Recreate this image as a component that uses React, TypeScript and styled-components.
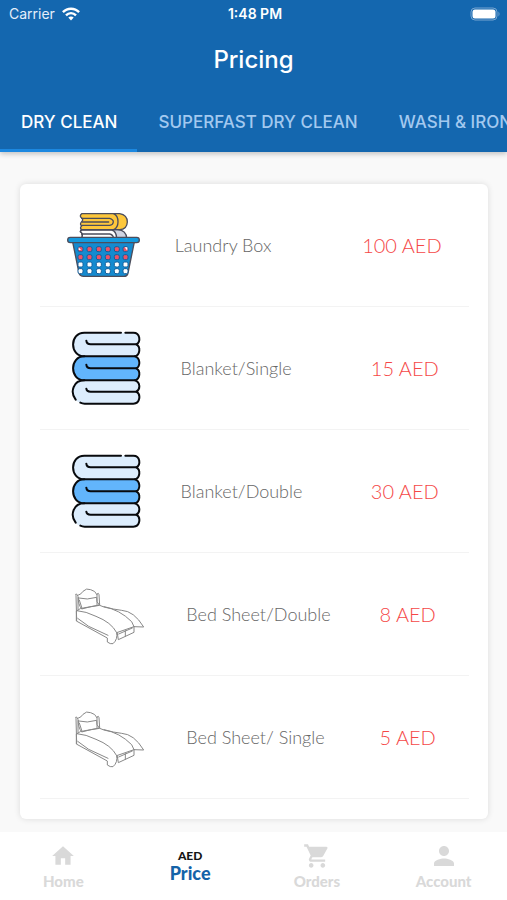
import React, { useState } from "react";
import styled, { createGlobalStyle } from "styled-components";
import { MdHome, MdPerson, MdShoppingCart } from "react-icons/md";

const GlobalStyle = createGlobalStyle`
  *, *::before, *::after { box-sizing: border-box; }
  body { margin: 0; background: #f9f9f9; font-family: Inter, sans-serif; }
  button { font: inherit; border: 0; background: none; padding: 0; cursor: pointer; }
`;

const Page = styled.div`
  display: flex;
  flex-direction: column;
  min-height: 100vh;
`;

const Header = styled.header`
  background: #1467af;
  color: #fff;
  box-shadow: 0 2px 5px rgba(0, 0, 0, 0.22);
`;

const StatusBar = styled.div`
  display: grid;
  grid-template-columns: 1fr auto 1fr;
  align-items: center;
  height: 28px;
  padding: 0 6px 0 9px;
  font-size: 14px;
  line-height: 20px;
`;

const Carrier = styled.div`
  display: flex;
  align-items: center;
  gap: 7px;
  color: #e4eefa;
`;

const Clock = styled.time`
  font-size: 14px;
  font-weight: 600;
`;

const BatteryIcon = styled.svg`
  justify-self: end;
`;

const Title = styled.h1`
  margin: 0;
  font-size: 24px;
  font-weight: 500;
  line-height: 64px;
  text-align: center;
`;

const Tabs = styled.div`
  display: flex;
  height: 60px;
  overflow-x: auto;
  scrollbar-width: none;
`;

const Tab = styled.button<{ $active: boolean }>`
  && {
    flex: none;
    padding: 3px 20px 0 21px;
    border-bottom: 3px solid ${(p) => (p.$active ? "#1c88e0" : "transparent")};
    color: ${(p) => (p.$active ? "#fff" : "#a3c9ef")};
    font-size: 17px;
    font-weight: 500;
    white-space: nowrap;
  }
`;

const Main = styled.main`
  flex: 1;
  padding: 32px 19px 13px 20px;
`;

const Card = styled.ul`
  margin: 0;
  padding: 0 19px 20px 20px;
  list-style: none;
  background: #fff;
  border-radius: 6px;
  box-shadow: 0 0 6px rgba(0, 0, 0, 0.12);
`;

const Row = styled.li`
  display: flex;
  align-items: center;
  justify-content: space-evenly;
  height: 123px;
  border-bottom: 1px solid #f3f3f3;
  font-family: Lato, sans-serif;
`;

const Picture = styled.svg`
  flex: none;
  width: 80px;
  height: 80px;
`;

const ItemName = styled.span`
  width: 160px;
  color: #666;
  font-size: 18px;
  font-weight: 300;
  line-height: 24px;
`;

const Price = styled.span`
  color: #f54747;
  font-size: 20px;
  font-weight: 300;
  line-height: 24px;
  white-space: nowrap;
`;

const BottomNav = styled.nav`
  display: grid;
  grid-template-columns: repeat(4, 1fr);
  height: 68px;
  background: #fff;
`;

const NavItem = styled.button<{ $active?: boolean }>`
  && {
    display: flex;
    flex-direction: column;
    align-items: center;
    padding-top: ${(p) => (p.$active ? "16px" : "8px")};
    color: ${(p) => (p.$active ? "#1463a8" : "#d9d9d9")};
    font-family: Lato, sans-serif;
    font-size: ${(p) => (p.$active ? "18px" : "15px")};
    font-weight: 900;
    line-height: 18px;
  }
`;

const IconSlot = styled.span`
  display: flex;
  align-items: center;
  justify-content: center;
  height: 32px;
`;

const Currency = styled.span`
  color: #151515;
  font-size: 12px;
  line-height: 16px;
`;

function WifiIcon() {
  return (
    <svg width="18" height="14" viewBox="0 0 18 14" aria-hidden="true">
      <g fill="none" stroke="#fff" strokeWidth="2.4">
        <path d="M0.9 5.2C5.4 0.5 12.6 0.5 17.1 5.2" />
        <path d="M4 8.3C6.8 5.4 11.2 5.4 14 8.3" />
      </g>
      <path d="M6.3 10.6C7.8 9 10.2 9 11.7 10.6L9 13.5Z" fill="#fff" />
    </svg>
  );
}

function Battery() {
  return (
    <BatteryIcon width="31" height="14" viewBox="0 0 31 14" aria-hidden="true">
      <rect x="1" y="1" width="26" height="12" rx="4" fill="none" stroke="#76a5d1" />
      <rect x="2.5" y="2.5" width="23" height="9" rx="2.5" fill="#fff" />
      <path d="M28.5 4.5Q30.5 7 28.5 9.5Z" fill="#76a5d1" />
    </BatteryIcon>
  );
}

const holeColumns = [94, 121, 149, 176, 203, 229];
const holeRows = [162, 186, 208, 228];

function Basket() {
  return (
    <Picture viewBox="54 30 240 240" aria-hidden="true">
      <g stroke="#4b4d5c" strokeWidth="4" strokeLinejoin="round" strokeLinecap="round">
        <path d="M98 104H206Q232 106 233 130H98Q104 117 94 110Q94 104 98 104Z" fill="#cfd4e2" />
        <path d="M98 105H188Q202 108 203 130H98Q104 117 94 110Z" fill="#fff" />
        <path d="M98 117H182Q192 119 194 130" fill="none" />
        <path d="M98 56H212Q235 60 235 81Q234 103 212 104H98Q91 99 98 93Q91 88 98 80Q104 74 98 69Q90 63 98 56Z" fill="#fdc73b" />
        <path d="M194 56Q207 62 207 80Q207 98 194 104M98 70H182Q193 73 193 81Q192 90 182 91H98M100 81H179" fill="none" />
        <path d="M70 136H257L237 234Q235 244 224 244H104Q93 244 90 234Z" fill="#148bd0" />
        <rect x="56" y="127" width="215" height="16" rx="8" fill="#159ade" />
      </g>
      {holeRows.map((y, r) =>
        holeColumns.map((x) => (
          <rect
            key={`${x}-${y}`}
            x={x - 7}
            y={y - 7}
            width="15"
            height="15"
            rx="5"
            fill={r < 2 ? "#ee5367" : "#fff"}
            stroke="#155f9b"
            strokeWidth="3"
          />
        ))
      )}
      <path d="M89 157L96 165H89ZM227 157H235V167Z" fill="#fff" />
    </Picture>
  );
}

function Blanket() {
  return (
    <Picture viewBox="63 24 240 240" aria-hidden="true">
      <path d="M106 38H256Q269 42 269 55Q269 67 262 73Q269 79 269 91Q269 104 260 109H106Q72 105 72 73Q72 42 106 38Z" fill="#dcedfd" />
      <path d="M106 109H260Q269 115 269 127Q269 139 262 145Q269 151 269 163Q269 176 260 181H106Q72 177 72 145Q72 113 106 109Z" fill="#62b5fc" />
      <path d="M106 181H260Q269 187 269 199Q269 210 262 215Q269 221 269 233Q267 250 254 251H106Q72 247 72 216Q72 185 106 181Z" fill="#dcedfd" />
      <g fill="none" stroke="#080a0d" strokeWidth="6" strokeLinecap="round" strokeLinejoin="round">
        <path d="M216 38H106C61 38 61 109 106 109H257M229 38H253C274 38 276 66 262 73C275 80 274 104 258 109" />
        <path d="M106 109C61 109 61 181 106 181H257M258 109C274 114 275 138 262 145C275 152 274 176 258 181" />
        <path d="M106 181C73 181 62 216 80 239M94 248Q100 251 107 251H253C274 251 276 222 262 215C275 208 274 186 258 181" />
        <path d="M112 62Q113 73 125 73H262M112 134Q113 145 125 145H262M112 206Q113 215 125 215H262" />
      </g>
    </Picture>
  );
}

function Bed() {
  return (
    <Picture viewBox="72 12 240 240" aria-hidden="true">
      <g fill="none" stroke="#888" strokeWidth="3" strokeLinecap="round" strokeLinejoin="round">
        <path d="M83 152L81 77Q78 71 83 72L87 80V119M87 76Q97 73 102 64Q112 53 125 59Q139 62 144 74" />
        <path d="M144 104V72Q149 67 150 74L152 105M88 84Q115 91 143 82Q141 96 151 105Q130 108 98 117Q87 103 88 84Z" />
        <path d="M91 90L99 115M84 122Q92 114 108 113L152 106L165 111Q211 118 248 155L255 170" />
        <path d="M84 122Q111 124 141 139Q187 157 203 188L255 170" />
        <path d="M82 124V153L175 204V216Q184 223 192 221Q207 208 203 188" />
        <path d="M86 145L119 169L177 196M165 110Q196 119 218 121Q255 123 284 171L255 170V187L208 209L205 190M229 182V199M209 192L250 174" />
      </g>
    </Picture>
  );
}

const tabs = ["DRY CLEAN", "SUPERFAST DRY CLEAN", "WASH & IRON"];

const items = [
  { name: "Laundry Box", price: "100 AED", Art: Basket },
  { name: "Blanket/Single", price: "15 AED", Art: Blanket },
  { name: "Blanket/Double", price: "30 AED", Art: Blanket },
  { name: "Bed Sheet/Double", price: "8 AED", Art: Bed },
  { name: "Bed Sheet/ Single", price: "5 AED", Art: Bed },
];

export default function App() {
  const [active, setActive] = useState(0);

  return (
    <Page>
      <GlobalStyle />
      <Header>
        <StatusBar>
          <Carrier>
            Carrier
            <WifiIcon />
          </Carrier>
          <Clock>1:48 PM</Clock>
          <Battery />
        </StatusBar>
        <Title>Pricing</Title>
        <Tabs role="tablist">
          {tabs.map((label, i) => (
            <Tab
              key={label}
              type="button"
              role="tab"
              aria-selected={i === active}
              $active={i === active}
              onClick={() => setActive(i)}
            >
              {label}
            </Tab>
          ))}
        </Tabs>
      </Header>
      <Main>
        <Card>
          {items.map(({ name, price, Art }) => (
            <Row key={name}>
              <Art />
              <ItemName>{name}</ItemName>
              <Price>{price}</Price>
            </Row>
          ))}
        </Card>
      </Main>
      <BottomNav>
        <NavItem type="button">
          <IconSlot><MdHome size={26} /></IconSlot>
          Home
        </NavItem>
        <NavItem type="button" $active aria-current="page">
          <Currency>AED</Currency>
          Price
        </NavItem>
        <NavItem type="button">
          <IconSlot><MdShoppingCart size={28} /></IconSlot>
          Orders
        </NavItem>
        <NavItem type="button">
          <IconSlot><MdPerson size={30} /></IconSlot>
          Account
        </NavItem>
      </BottomNav>
    </Page>
  );
}
